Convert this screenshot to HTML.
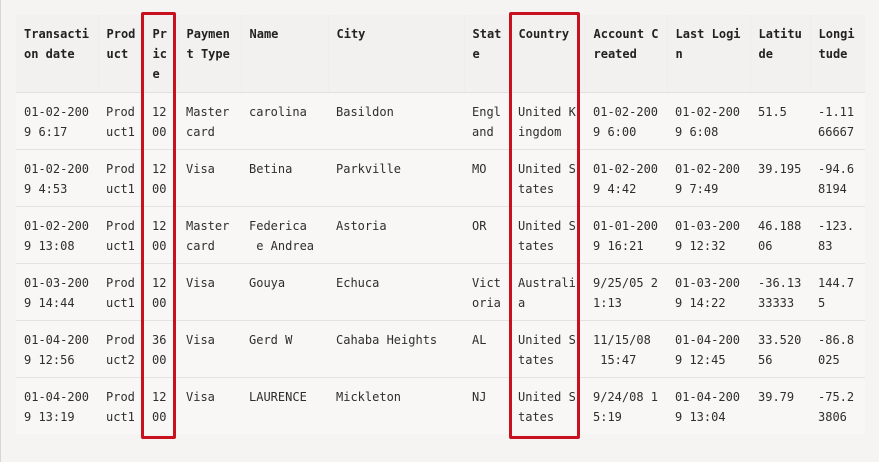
<!DOCTYPE html>
<html><head><style>
body{margin:0;width:879px;height:462px;background:#f5f4f2;position:relative;overflow:hidden;font-family:"DejaVu Sans Mono","Liberation Mono",monospace;font-size:12px;}
.edge{position:absolute;left:0;top:0;width:1px;height:462px;background:#d8d6d3}
table{position:absolute;left:16px;top:15px;border-collapse:collapse;table-layout:fixed;background:#f8f7f5;width:849px}
td,th{vertical-align:top;padding:9px 0 0 8px;line-height:20px;white-space:nowrap;text-align:left;overflow:hidden}
th{background:#f2f1ef;font-weight:bold;color:#222;height:68px;border-left:1px solid #efedea;border-bottom:1px solid #e2e0dd}
th:first-child{border-left:none}
td{height:47px;color:#2e2e2e;border-bottom:1px solid #e4e2df}
tr:last-child td{border-bottom:none}
.box{position:absolute;border:3px solid #c8101e;border-radius:2px}
</style></head><body>
<div class="edge"></div>
<table>
<colgroup><col style="width:82px"><col style="width:46px"><col style="width:34px"><col style="width:63px"><col style="width:87px"><col style="width:136px"><col style="width:46px"><col style="width:75px"><col style="width:82px"><col style="width:83px"><col style="width:60px"><col style="width:55px"></colgroup>
<tr><th>Transacti<br>on date</th><th>Prod<br>uct</th><th>Pr<br>ic<br>e</th><th>Paymen<br>t Type</th><th>Name</th><th>City</th><th>Stat<br>e</th><th>Country</th><th>Account C<br>reated</th><th>Last Logi<br>n</th><th>Latitu<br>de</th><th>Longi<br>tude</th></tr>
<tr><td>01-02-200<br>9 6:17</td><td>Prod<br>uct1</td><td>12<br>00</td><td>Master<br>card</td><td>carolina</td><td>Basildon</td><td>Engl<br>and</td><td>United K<br>ingdom</td><td>01-02-200<br>9 6:00</td><td>01-02-200<br>9 6:08</td><td>51.5</td><td>-1.11<br>66667</td></tr>
<tr><td>01-02-200<br>9 4:53</td><td>Prod<br>uct1</td><td>12<br>00</td><td>Visa</td><td>Betina</td><td>Parkville</td><td>MO</td><td>United S<br>tates</td><td>01-02-200<br>9 4:42</td><td>01-02-200<br>9 7:49</td><td>39.195</td><td>-94.6<br>8194</td></tr>
<tr><td>01-02-200<br>9 13:08</td><td>Prod<br>uct1</td><td>12<br>00</td><td>Master<br>card</td><td>Federica<br>&nbsp;e Andrea</td><td>Astoria</td><td>OR</td><td>United S<br>tates</td><td>01-01-200<br>9 16:21</td><td>01-03-200<br>9 12:32</td><td>46.188<br>06</td><td>-123.<br>83</td></tr>
<tr><td>01-03-200<br>9 14:44</td><td>Prod<br>uct1</td><td>12<br>00</td><td>Visa</td><td>Gouya</td><td>Echuca</td><td>Vict<br>oria</td><td>Australi<br>a</td><td>9/25/05 2<br>1:13</td><td>01-03-200<br>9 14:22</td><td>-36.13<br>33333</td><td>144.7<br>5</td></tr>
<tr><td>01-04-200<br>9 12:56</td><td>Prod<br>uct2</td><td>36<br>00</td><td>Visa</td><td>Gerd W</td><td>Cahaba Heights</td><td>AL</td><td>United S<br>tates</td><td>11/15/08<br>&nbsp;15:47</td><td>01-04-200<br>9 12:45</td><td>33.520<br>56</td><td>-86.8<br>025</td></tr>
<tr><td>01-04-200<br>9 13:19</td><td>Prod<br>uct1</td><td>12<br>00</td><td>Visa</td><td>LAURENCE</td><td>Mickleton</td><td>NJ</td><td>United S<br>tates</td><td>9/24/08 1<br>5:19</td><td>01-04-200<br>9 13:04</td><td>39.79</td><td>-75.2<br>3806</td></tr>
</table>
<div class="box" style="left:141px;top:12px;width:29px;height:421px"></div>
<div class="box" style="left:509px;top:12px;width:65px;height:421px"></div>
</body></html>
